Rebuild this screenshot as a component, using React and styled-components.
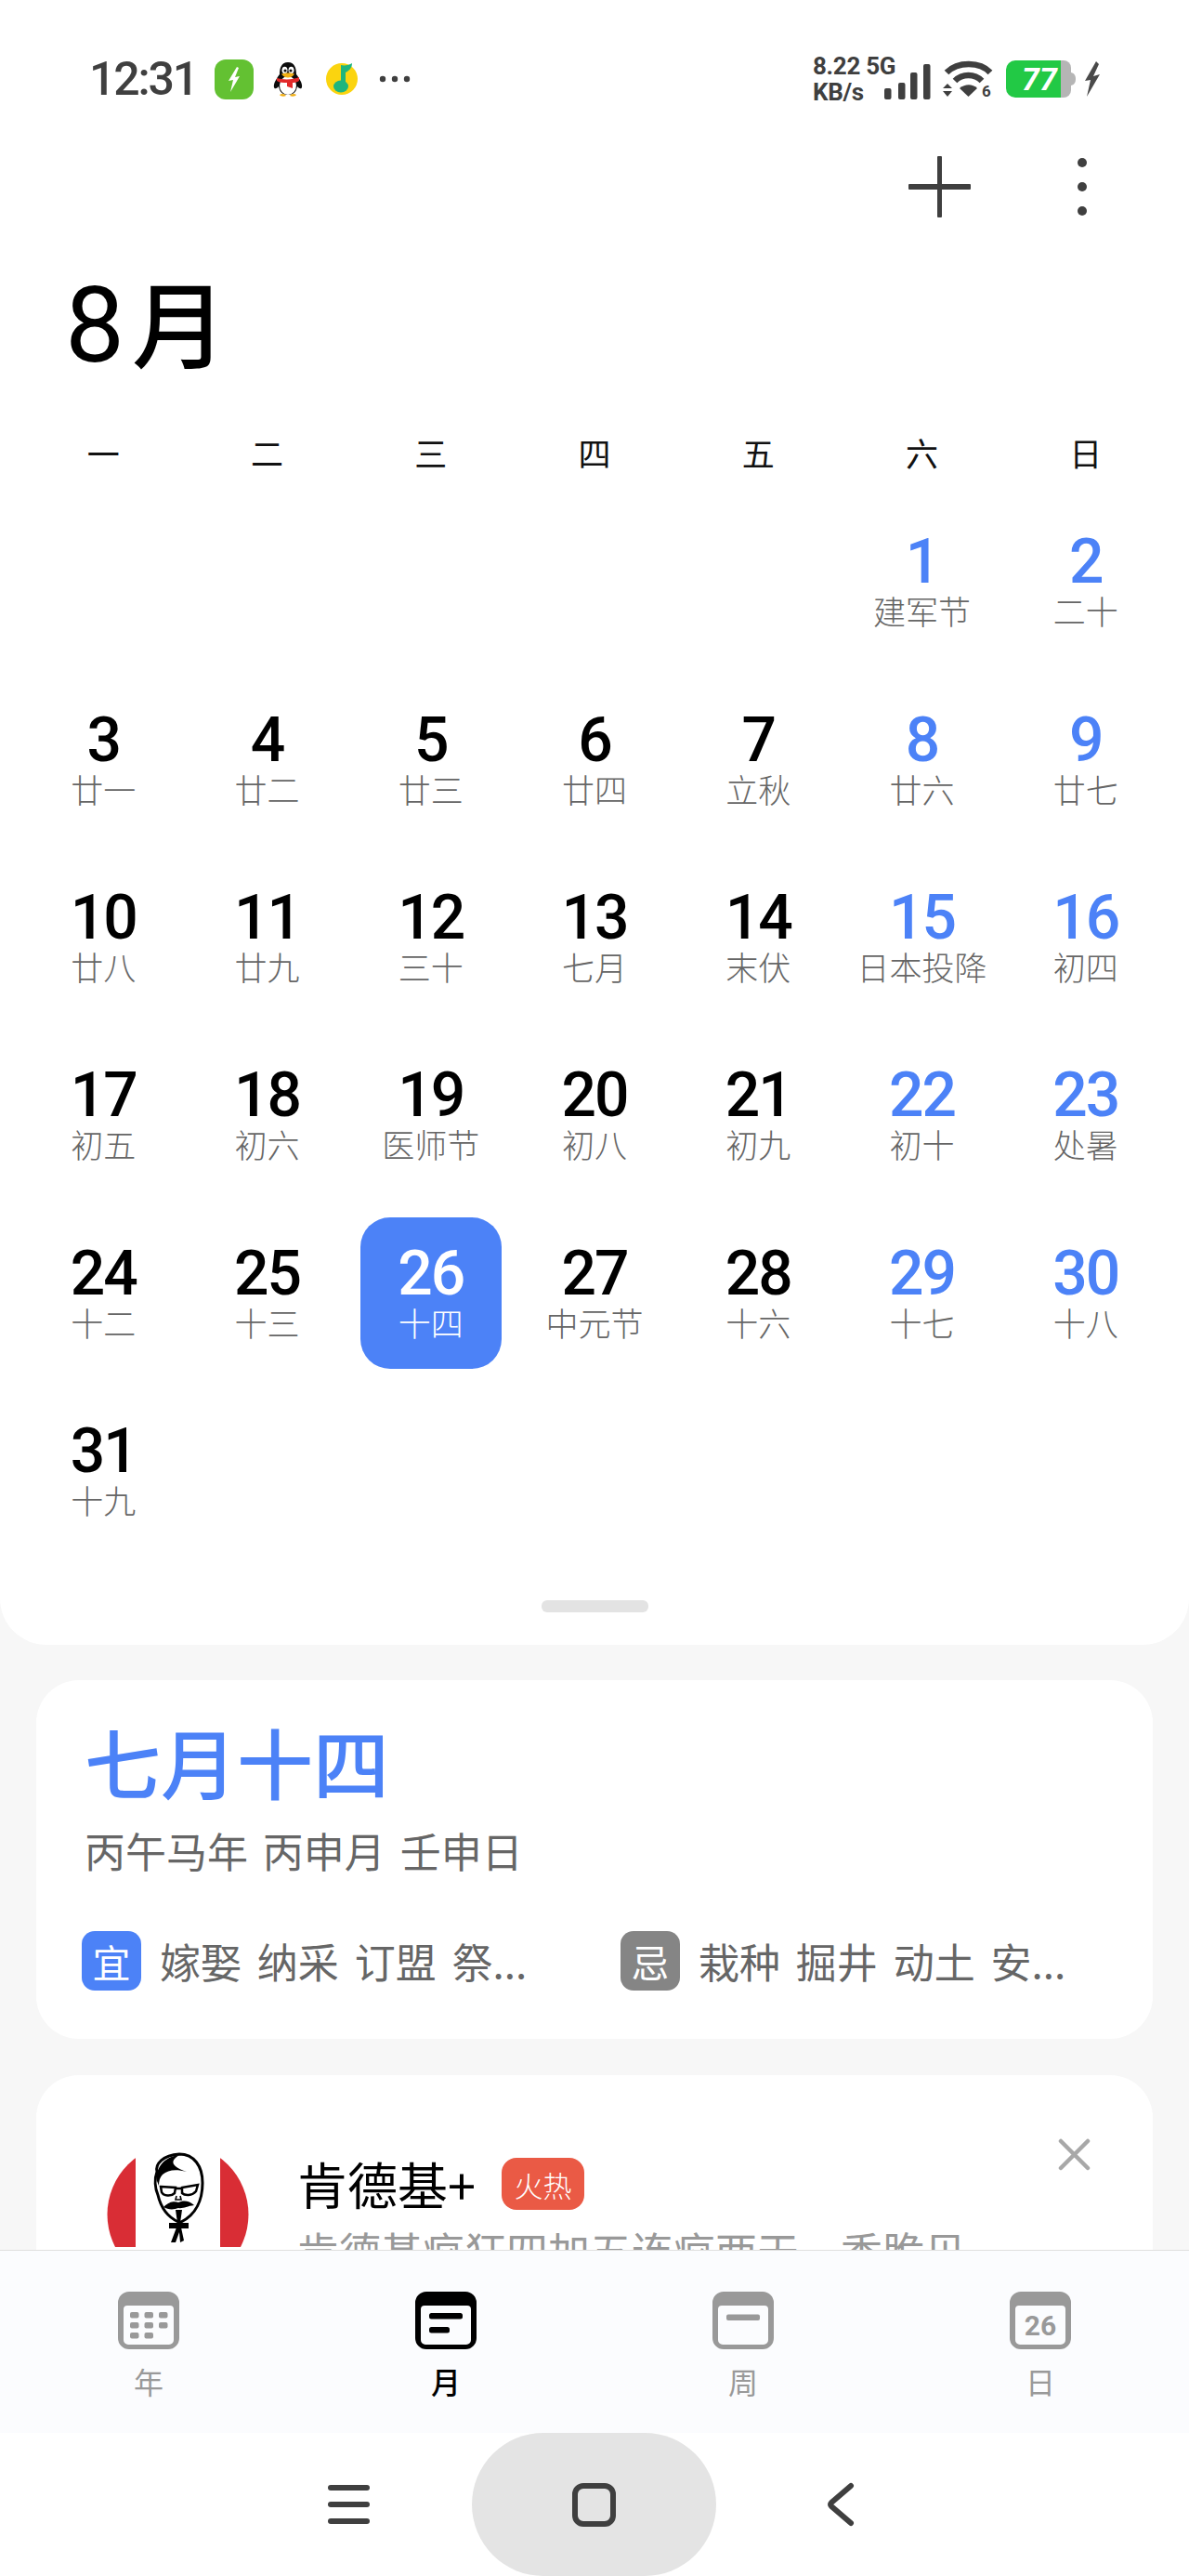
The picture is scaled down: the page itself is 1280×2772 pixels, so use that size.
import React from 'react';
import styled, { createGlobalStyle } from 'styled-components';

const BLUE = '#4c82f7';
const CJK = '"Noto Sans CJK SC", "Noto Sans", sans-serif';
const NUM = 'Roboto, "Noto Sans CJK SC", sans-serif';

const GlobalStyle = createGlobalStyle`
  html, body { margin: 0; padding: 0; background: #f7f7f7; }
  * { box-sizing: border-box; }
  body { font-family: ${CJK}; }
`;

const Page = styled.div`
  width: 1280px;
  height: 2772px;
  display: flex;
  flex-direction: column;
  overflow: hidden;
  background: #f7f7f7;
`;

const Scroller = styled.main`
  flex: 1;
  min-height: 0;
  overflow: hidden;
`;

const Sheet = styled.section`
  background: #fff;
  border-radius: 0 0 50px 50px;
  height: 1770px;
  display: flex;
  flex-direction: column;
`;

const StatusBar = styled.div`
  height: 130px;
  padding: 40px 95px 0 96px;
  display: flex;
  align-items: center;
  justify-content: space-between;
  color: #3f3f3f;
`;

const StatusGroup = styled.div`
  display: flex;
  align-items: center;
`;

const Clock = styled.span`
  font: 500 50px/1 ${NUM};
  letter-spacing: -2.2px;
  margin-right: 19px;
`;

const NetSpeed = styled.div`
  width: 76px;
  font: 700 26px/28px ${NUM};
  letter-spacing: -0.3px;
  white-space: nowrap;
  margin-right: 1px;
`;

const Toolbar = styled.div`
  height: 142px;
  padding-right: 110px;
  display: flex;
  align-items: center;
  justify-content: flex-end;
  gap: 115px;
`;

const Title = styled.h1`
  margin: 0;
  height: 158px;
  padding-left: 70px;
  font: 500 102px/146px ${CJK};
  color: #000;
`;

const MonthNumber = styled.span`
  font: 400 114px/146px ${NUM};
  margin-right: 8px;
`;

const WeekRow = styled.div`
  height: 100px;
  padding: 14px 23px 0;
  display: grid;
  grid-template-columns: repeat(7, 1fr);
  align-items: center;
`;

const WeekDay = styled.div`
  text-align: center;
  font-size: 35px;
  line-height: 84px;
  color: #111;
`;

const MonthGrid = styled.div`
  padding: 0 23px;
  display: grid;
  grid-template-columns: repeat(7, 1fr);
  grid-auto-rows: 191.4px;
`;

const DayCell = styled.div`
  justify-self: center;
  align-self: center;
  width: 152px;
  height: 163px;
  padding-top: 31px;
  border-radius: 32px;
  display: flex;
  flex-direction: column;
  align-items: center;
  white-space: nowrap;
  background: ${p => (p.$today ? BLUE : 'transparent')};
`;

const DayNumber = styled.div`
  font: 500 66px/60px ${NUM};
  letter-spacing: -2px;
  color: ${p => (p.$today ? '#fff' : p.$weekend ? BLUE : '#000')};
`;

const Lunar = styled.div`
  font-size: 35px;
  line-height: 44px;
  font-weight: 300;
  color: ${p => (p.$today ? '#fff' : '#666')};
`;

const SheetHandle = styled.div`
  align-self: center;
  margin-top: 44px;
  width: 115px;
  height: 13px;
  border-radius: 6px;
  background: #e3e3e3;
`;

const Card = styled.article`
  margin: 38px 39px 0;
  background: #fff;
  border-radius: 46px;
`;

const AlmanacCard = styled(Card)`
  height: 386px;
  padding: 32px 52px 0 52px;
`;

const LunarDate = styled.div`
  font-size: 82px;
  font-weight: 500;
  line-height: 110px;
  color: ${BLUE};
`;

const GanZhi = styled.div`
  margin-top: 11px;
  font-size: 44px;
  line-height: 60px;
  word-spacing: 6px;
  color: #666;
`;

const OmenRow = styled.div`
  margin-top: 57px;
  display: grid;
  grid-template-columns: 580px 1fr;
`;

const Omen = styled.div`
  display: flex;
  align-items: center;
  gap: 20px;
`;

const OmenBadge = styled.div`
  width: 64px;
  height: 64px;
  margin-left: -3px;
  border-radius: 14px;
  display: flex;
  align-items: center;
  justify-content: center;
  font-size: 41px;
  color: #fff;
  background: ${p => p.$color};
`;

const OmenText = styled.div`
  font-size: 44px;
  word-spacing: 7px;
  color: #666;
  white-space: nowrap;
`;

const AdCard = styled(Card)`
  margin-top: 39px;
  height: 300px;
  padding: 74px 60px 0 76px;
  display: flex;
  align-items: flex-start;
`;

const AdLogo = styled.svg`
  flex: none;
  width: 153px;
  height: 111px;
`;

const AdBody = styled.div`
  margin-left: 52px;
  flex: 1;
  min-width: 0;
`;

const AdHead = styled.div`
  margin-top: 11px;
  display: flex;
  align-items: center;
`;

const AdName = styled.div`
  font-size: 54px;
  line-height: 64px;
  color: #000;
`;

const HotTag = styled.div`
  margin-left: 28px;
  width: 89px;
  height: 56px;
  border-radius: 16px;
  display: flex;
  align-items: center;
  justify-content: center;
  font-size: 31px;
  font-weight: 300;
  color: #fff;
  background: #ea5a45;
`;

const CloseIcon = styled.svg`
  margin-left: auto;
  margin-top: -64px;
  margin-right: 7px;
  width: 35px;
  height: 35px;
`;

const AdText = styled.div`
  margin-top: 10px;
  font-size: 45px;
  line-height: 60px;
  color: #999;
  white-space: nowrap;
`;

const TabBar = styled.nav`
  flex: none;
  height: 197px;
  border-top: 1px solid #dfdfdf;
  background: #fbfcfe;
  display: grid;
  grid-template-columns: repeat(4, 1fr);
`;

const Tab = styled.div`
  padding-top: 44px;
  display: flex;
  flex-direction: column;
  align-items: center;
  color: ${p => (p.$active ? '#000' : '#999')};
`;

const TabIcon = styled.svg`
  width: 66px;
  height: 62px;
`;

const TabLabel = styled.div`
  margin-top: 14px;
  font-size: 32px;
  line-height: 40px;
  font-weight: ${p => (p.$active ? 500 : 400)};
`;

const NavBar = styled.div`
  flex: none;
  height: 154px;
  background: #fff;
  display: grid;
  grid-template-columns: repeat(3, 265px);
  justify-content: center;
  align-items: center;
  justify-items: center;
  color: #3f3f3f;
`;

const HomePill = styled.div`
  width: 263px;
  height: 154px;
  margin-left: -2px;
  border-radius: 77px;
  background: #e4e4e4;
  display: flex;
  align-items: center;
  justify-content: center;
`;

const rows = [
  [null, null, null, null, null, ['1', '建军节'], ['2', '二十']],
  [['3', '廿一'], ['4', '廿二'], ['5', '廿三'], ['6', '廿四'], ['7', '立秋'], ['8', '廿六'], ['9', '廿七']],
  [['10', '廿八'], ['11', '廿九'], ['12', '三十'], ['13', '七月'], ['14', '末伏'], ['15', '日本投降'], ['16', '初四']],
  [['17', '初五'], ['18', '初六'], ['19', '医师节'], ['20', '初八'], ['21', '初九'], ['22', '初十'], ['23', '处暑']],
  [['24', '十二'], ['25', '十三'], ['26', '十四'], ['27', '中元节'], ['28', '十六'], ['29', '十七'], ['30', '十八']],
  [['31', '十九'], null, null, null, null, null, null],
];

const ChargeIcon = () => (
  <svg width="42" height="43" viewBox="0 0 42 43" style={{ marginRight: 21 }}>
    <rect width="42" height="43" rx="12" fill="#63c132" />
    <path d="M24 8 L15 23 L20 22 L17 35 L27 18 L22 19 L26 9 Z" fill="#fff" />
  </svg>
);

const PenguinIcon = () => (
  <svg width="32" height="39" viewBox="0 0 32 39" style={{ marginRight: 25 }}>
    <path d="M16 1 C9 1 7 7 7 14 C4 18 0 24 1 28 C2 31 5 28 6 27 C7 33 10 36 16 36 C22 36 25 33 26 27 C27 28 30 31 31 28 C32 24 28 18 25 14 C25 7 23 1 16 1 Z" fill="#0c0c0c" />
    <ellipse cx="16" cy="26" rx="9" ry="10" fill="#fff" />
    <ellipse cx="12.5" cy="9.5" rx="3" ry="3.8" fill="#fff" />
    <ellipse cx="19.5" cy="9.5" rx="3" ry="3.8" fill="#fff" />
    <circle cx="13" cy="10" r="1.6" fill="#111" />
    <circle cx="19" cy="10" r="1.6" fill="#111" />
    <path d="M9 13.5 C13 12 19 12 23 13.5 C21 17 18 17.5 16 17.5 C14 17.5 11 17 9 13.5 Z" fill="#f2b015" />
    <path d="M4 18 C10 20 22 20 28 17 L28 21 C25 23 22 23 21 23 L21 29 L15 27 L15 23 C11 23 7 23 4 21 Z" fill="#e2292a" />
    <path d="M7 36 C9 34 13 35 14 37 C12 38 8 38 7 36 Z M18 37 C19 35 23 34 25 36 C24 38 20 38 18 37 Z" fill="#f2b015" />
  </svg>
);

const MusicIcon = () => (
  <svg width="34" height="38" viewBox="0 0 34 38" style={{ marginRight: 23 }}>
    <circle cx="17" cy="19" r="17" fill="#fbd40f" />
    <path d="M16 4 L16 27 L21 27 L21 12 C25 10 28 7 28 2 C25 4 20 5 16 4 Z" fill="#1fb57d" />
    <ellipse cx="16" cy="27" rx="8" ry="6.5" fill="#1fb57d" />
  </svg>
);

const MoreDots = () => (
  <svg width="34" height="8" viewBox="0 0 34 8">
    <circle cx="4" cy="4" r="3.2" fill="#3f3f3f" />
    <circle cx="17" cy="4" r="3.2" fill="#3f3f3f" />
    <circle cx="30" cy="4" r="3.2" fill="#3f3f3f" />
  </svg>
);

const SignalIcon = () => (
  <svg width="50" height="38" viewBox="0 0 50 38" style={{ marginRight: 13, marginTop: 6 }} fill="#3f3f3f">
    <rect x="0" y="26" width="7.5" height="12" rx="2" />
    <rect x="15" y="20" width="7.5" height="18" rx="2" />
    <rect x="28" y="9" width="7.5" height="29" rx="2" />
    <rect x="42" y="0" width="7.5" height="38" rx="2" />
  </svg>
);

const WifiIcon = () => (
  <svg width="55" height="40" viewBox="0 0 55 40" style={{ marginRight: 13 }} fill="none">
    <path d="M4 13 C16 1 40 1 51 13" stroke="#3f3f3f" strokeWidth="6.5" />
    <path d="M13 22 C21 14 34 14 42 22" stroke="#3f3f3f" strokeWidth="6.5" />
    <path d="M18 30 C24 25 32 25 37 30 L27.5 39 Z" fill="#3f3f3f" />
    <path d="M5 25 L10 30 L0 30 Z M0 33 L10 33 L5 39 Z" fill="#3f3f3f" />
    <text x="42" y="39" fontFamily="Roboto, sans-serif" fontWeight="700" fontSize="17" fill="#3f3f3f">6</text>
  </svg>
);

const BatteryIcon = () => (
  <svg width="75" height="40" viewBox="0 0 75 40" style={{ marginRight: 9 }}>
    <path d="M10 0 H59 V40 H10 A10 10 0 0 1 0 30 V10 A10 10 0 0 1 10 0 Z" fill="#22c945" />
    <path d="M59 0 H62 A8 8 0 0 1 70 8 V32 A8 8 0 0 1 62 40 H59 Z" fill="#b5b5b5" />
    <path d="M70 13 C74 14 75 17 75 20 C75 23 74 26 70 27 Z" fill="#b5b5b5" />
    <text x="36" y="32" textAnchor="middle" fontFamily="Roboto, sans-serif" fontStyle="italic" fontWeight="700" fontSize="34" fill="#fff">77</text>
  </svg>
);

const BoltIcon = () => (
  <svg width="18" height="38" viewBox="0 0 18 38">
    <path d="M13 0 L1 21 L7 20 L3 38 L17 14 L10 16 L16 3 Z" fill="#4a4a4a" />
  </svg>
);

const KfcLogo = () => (
  <AdLogo viewBox="0 0 153 111">
    <circle cx="76.5" cy="76" r="76" fill="#d92d35" />
    <rect x="31" y="0" width="91" height="111" fill="#fff" />
    <path d="M54 30 C52 22 60 12 78 11 C94 11 103 24 103 42 C103 60 96 76 80 84 L77 84 C64 78 58 68 55 55 C52 48 51 38 54 30 Z" fill="#fff" stroke="#000" strokeWidth="3" />
    <path d="M54 40 C52 28 60 14 78 12 C70 17 66 23 86 30 C74 27 66 28 60 33 C57 36 56 40 56 45 Z" fill="#000" />
    <path d="M58 46 L74 47 L73 53 C69 57 61 56 59 52 Z M81 47 L98 44 L96 51 C92 56 84 56 81 53 Z" fill="#fff" stroke="#000" strokeWidth="2.5" />
    <path d="M74 48 H81" stroke="#000" strokeWidth="2.5" />
    <path d="M75 56 L74 60 L80 60 L79 56" fill="none" stroke="#000" strokeWidth="1.6" />
    <path d="M61 68 C68 61 74 62 77 63 C81 61 88 60 94 66 C86 67 82 70 77 69 C72 71 66 71 61 68 Z" fill="#000" />
    <path d="M74 71 L81 71 L79 85 L76 85 Z" fill="#000" />
    <path d="M67 85 L88 85 L88 91 L67 91 Z" fill="#000" />
    <path d="M75 90 L69 106 L74 106 L78 95 L79 106 L83 104 L80 90 Z" fill="#000" />
  </AdLogo>
);

const FrameShape = () => (
  <path fillRule="evenodd" d="M12 0 H54 A12 12 0 0 1 66 12 V50 A12 12 0 0 1 54 62 H12 A12 12 0 0 1 0 50 V12 A12 12 0 0 1 12 0 Z M10 15 A4 4 0 0 0 6 19 V52 A5 5 0 0 0 11 57 H55 A5 5 0 0 0 60 52 V19 A4 4 0 0 0 56 15 Z" fill="currentColor" />
);

const YearIcon = () => (
  <TabIcon viewBox="0 0 66 62">
    <FrameShape />
    {[[13, 22], [28.5, 22], [44, 22], [13, 33], [28.5, 33], [44, 33], [13, 44], [28.5, 44]].map(([x, y]) => (
      <rect key={`${x}-${y}`} x={x} y={y} width="9.5" height="6.5" rx="2" fill="currentColor" />
    ))}
  </TabIcon>
);

const MonthIcon = () => (
  <TabIcon viewBox="0 0 66 62">
    <FrameShape />
    <rect x="15" y="23" width="36" height="6.5" rx="2.5" fill="currentColor" />
    <rect x="15" y="38" width="22" height="6.5" rx="2.5" fill="currentColor" />
  </TabIcon>
);

const WeekIcon = () => (
  <TabIcon viewBox="0 0 66 62">
    <FrameShape />
    <rect x="15" y="24.5" width="36" height="6.5" rx="2" fill="currentColor" />
  </TabIcon>
);

const DayIcon = () => (
  <TabIcon viewBox="0 0 66 62">
    <FrameShape />
    <text x="33" y="47" textAnchor="middle" fontFamily="Roboto, sans-serif" fontWeight="700" fontSize="30" fill="currentColor">26</text>
  </TabIcon>
);

const tabs = [
  { label: '年', Icon: YearIcon },
  { label: '月', Icon: MonthIcon, active: true },
  { label: '周', Icon: WeekIcon },
  { label: '日', Icon: DayIcon },
];

export default function App() {
  return (
    <Page>
      <GlobalStyle />
      <Scroller>
        <Sheet>
          <StatusBar>
            <StatusGroup>
              <Clock>12:31</Clock>
              <ChargeIcon />
              <PenguinIcon />
              <MusicIcon />
              <MoreDots />
            </StatusGroup>
            <StatusGroup>
              <NetSpeed>8.22 5G<br />KB/s</NetSpeed>
              <SignalIcon />
              <WifiIcon />
              <BatteryIcon />
              <BoltIcon />
            </StatusGroup>
          </StatusBar>
          <Toolbar>
            <svg width="67" height="66" viewBox="0 0 67 66">
              <rect x="0" y="30" width="67" height="6" rx="1" fill="#3f3f3f" />
              <rect x="31" y="0" width="5" height="66" rx="1" fill="#3f3f3f" />
            </svg>
            <svg width="10" height="62" viewBox="0 0 10 62" fill="#3f3f3f">
              <circle cx="5" cy="5" r="5" />
              <circle cx="5" cy="31" r="5" />
              <circle cx="5" cy="57" r="5" />
            </svg>
          </Toolbar>
          <Title><MonthNumber>8</MonthNumber>月</Title>
          <WeekRow>
            {['一', '二', '三', '四', '五', '六', '日'].map(d => (
              <WeekDay key={d}>{d}</WeekDay>
            ))}
          </WeekRow>
          <MonthGrid>
            {rows.flat().map((day, i) =>
              day ? (
                <DayCell key={i} $today={day[0] === '26'}>
                  <DayNumber $today={day[0] === '26'} $weekend={i % 7 > 4}>{day[0]}</DayNumber>
                  <Lunar $today={day[0] === '26'}>{day[1]}</Lunar>
                </DayCell>
              ) : (
                <div key={i} />
              )
            )}
          </MonthGrid>
          <SheetHandle />
        </Sheet>

        <AlmanacCard>
          <LunarDate>七月十四</LunarDate>
          <GanZhi>丙午马年 丙申月 壬申日</GanZhi>
          <OmenRow>
            <Omen>
              <OmenBadge $color={BLUE}>宜</OmenBadge>
              <OmenText>嫁娶 纳采 订盟 祭...</OmenText>
            </Omen>
            <Omen>
              <OmenBadge $color="#858585">忌</OmenBadge>
              <OmenText>栽种 掘井 动土 安...</OmenText>
            </Omen>
          </OmenRow>
        </AlmanacCard>

        <AdCard>
          <KfcLogo />
          <AdBody>
            <AdHead>
              <AdName>肯德基+</AdName>
              <HotTag>火热</HotTag>
              <CloseIcon viewBox="0 0 35 35">
                <path d="M3 3 L32 32 M32 3 L3 32" stroke="#a8a8a8" strokeWidth="4.5" strokeLinecap="round" />
              </CloseIcon>
            </AdHead>
            <AdText>肯德基疯狂四加五连疯两天，香脆贝</AdText>
          </AdBody>
        </AdCard>
      </Scroller>

      <TabBar>
        {tabs.map(({ label, Icon, active }) => (
          <Tab key={label} $active={active}>
            <Icon />
            <TabLabel $active={active}>{label}</TabLabel>
          </Tab>
        ))}
      </TabBar>

      <NavBar>
        <svg width="45" height="42" viewBox="0 0 45 42" fill="currentColor">
          <rect y="0" width="45" height="6" rx="3" />
          <rect y="18" width="45" height="6" rx="3" />
          <rect y="36" width="45" height="6" rx="3" />
        </svg>
        <HomePill>
          <svg width="47" height="47" viewBox="0 0 47 47">
            <rect x="3" y="3" width="41" height="41" rx="9" fill="none" stroke="#3f3f3f" strokeWidth="6" />
          </svg>
        </HomePill>
        <svg width="30" height="48" viewBox="0 0 30 48" fill="none">
          <path d="M26 4 L5 22 Q3 24 5 26 L26 44" stroke="#3f3f3f" strokeWidth="6" strokeLinecap="round" strokeLinejoin="round" />
        </svg>
      </NavBar>
    </Page>
  );
}
